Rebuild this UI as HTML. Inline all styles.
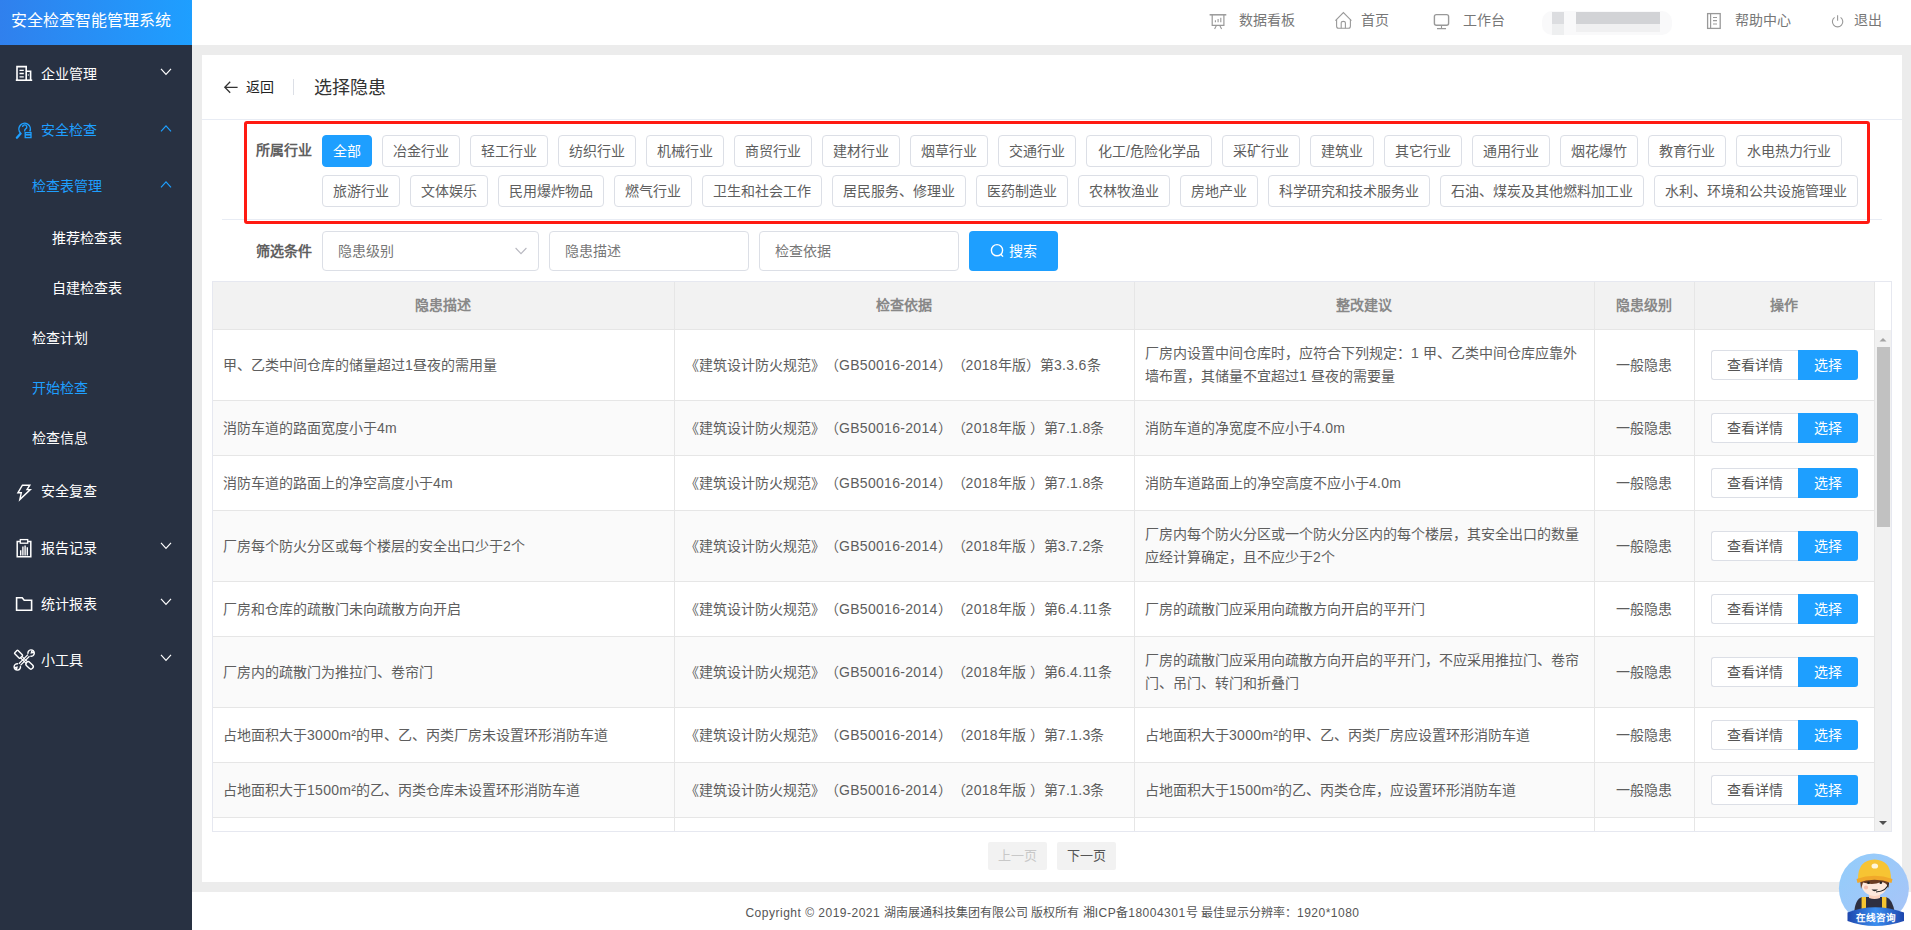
<!DOCTYPE html><html lang="zh-CN"><head><meta charset="utf-8"><style>
*{margin:0;padding:0;box-sizing:border-box}
html,body{text-spacing-trim:space-all;width:1911px;height:930px;overflow:hidden;background:#fff;font-family:"Liberation Sans",sans-serif;font-size:14px;color:#555}
.a{position:absolute;white-space:nowrap}
#side{position:absolute;left:0;top:0;width:192px;height:930px;background:#283142}
#logo{position:absolute;left:0;top:0;width:192px;height:45px;background:linear-gradient(90deg,#3080ed,#1e9fff);color:#fff;font-size:16px;line-height:42px;padding-left:11px;white-space:nowrap}
.mt{position:absolute;color:#fff;font-size:14px;line-height:20px;white-space:nowrap;font-weight:500}
.blue{color:#1e9fff}
#hdr{position:absolute;left:192px;top:0;width:1719px;height:45px;background:#fff}
#main{position:absolute;left:192px;top:45px;width:1719px;height:847px;background:#ececec}
#card{position:absolute;left:202px;top:55px;width:1700px;height:827px;background:#fff}
#foot{position:absolute;left:192px;top:892px;width:1719px;height:38px;background:#fff}
.nt{position:absolute;top:10px;line-height:20px;color:#777;font-size:14px;white-space:nowrap}
.tags{position:absolute;left:322px;top:135px;width:1545px;display:flex;flex-wrap:wrap;gap:8px 10px}
.tag{height:32px;line-height:30px;border:1px solid #dcdfe6;border-radius:4px;padding:0 10px;font-size:14px;color:#5e5e5e;background:#fff;white-space:nowrap}
.tag.on{background:#1e9fff;border-color:#1e9fff;color:#fff}
.inp{position:absolute;top:231px;height:40px;border:1px solid #dcdfe6;border-radius:4px;line-height:38px;padding-left:15px;color:#777;background:#fff;white-space:nowrap}
.cell{position:absolute;color:#5e5e5e;font-size:14px;white-space:nowrap}
.hl{position:absolute;background:#e6e6e6}
</style></head><body>
<div id="side">
<div id="logo">安全检查智能管理系统</div>
<div class="mt" style="left:41px;top:64px;color:#fff">企业管理</div>
<div class="mt" style="left:41px;top:120px;color:#1e9fff">安全检查</div>
<div class="mt" style="left:32px;top:176px;color:#1e9fff">检查表管理</div>
<div class="mt" style="left:52px;top:228px;color:#fff">推荐检查表</div>
<div class="mt" style="left:52px;top:278px;color:#fff">自建检查表</div>
<div class="mt" style="left:32px;top:328px;color:#fff">检查计划</div>
<div class="mt" style="left:32px;top:378px;color:#1e9fff">开始检查</div>
<div class="mt" style="left:32px;top:428px;color:#fff">检查信息</div>
<div class="mt" style="left:41px;top:481px;color:#fff">安全复查</div>
<div class="mt" style="left:41px;top:538px;color:#fff">报告记录</div>
<div class="mt" style="left:41px;top:594px;color:#fff">统计报表</div>
<div class="mt" style="left:41px;top:650px;color:#fff">小工具</div>
<svg class="a" style="left:0;top:0" width="192" height="930" fill="none"><path d="M161 68.8 L166 74.3 L171 68.8" stroke="#fff" stroke-width="1.2"/><path d="M161 131.3 L166 125.8 L171 131.3" stroke="#1e9fff" stroke-width="1.2"/><path d="M161 187.3 L166 181.8 L171 187.3" stroke="#1e9fff" stroke-width="1.2"/><path d="M161 542.8 L166 548.3 L171 542.8" stroke="#fff" stroke-width="1.2"/><path d="M161 598.8 L166 604.3 L171 598.8" stroke="#fff" stroke-width="1.2"/><path d="M161 654.8 L166 660.3 L171 654.8" stroke="#fff" stroke-width="1.2"/><g stroke="#fff" stroke-width="1.6"><path d="M17 80 V66.6 H26.2 V80"/><path d="M26.2 71.3 H30.6 V80"/><path d="M15.8 80.2 H32.2"/><path d="M19.5 70.3 H23.8 M19.5 73.5 H23.8 M19.5 76.8 H23.8" stroke-width="1.3"/><path d="M27.8 75 H29" stroke-width="1.2"/></g><g stroke="#1e9fff" stroke-width="1.5"><path d="M20.57 133.03 A5.7 5.7 0 1 1 29.77 131.41"/><path d="M16.9 137.7 L20.6 133.6" stroke-width="2.3" stroke-linecap="round"/><path d="M22.6 127 A2.1 2.1 0 1 1 25.6 128.9 Q24.6 129.5 24.6 131.6" stroke-width="1.4"/><rect x="25.2" y="132.6" width="5.8" height="5" fill="#283142" stroke-width="1.3"/><path d="M25.2 134.8 H31" stroke-width="1.6"/></g><path d="M22.4 485.2 L29.8 485.2 L27 489.6 L30.3 489.6 L19.8 499.6 L21.3 492.8 L17.9 492.8 Z" stroke="#fff" stroke-width="1.4" stroke-linejoin="miter"/><g stroke="#fff" stroke-width="1.5"><path d="M20 541.6 H17.2 V556.8 H30.8 V541.6 H28"/><rect x="20.3" y="539.6" width="7.4" height="3.6" stroke-width="1.3"/><path d="M20.7 555.5 V550.3 M22.9 555.5 V546.5 M25.1 555.5 V545.5 M27.3 555.5 V547.2" stroke-width="1.4"/></g><path d="M16.6 610.2 V597.8 H22.2 L24.2 600.2 H31.6 V610.2 Z" stroke="#fff" stroke-width="1.6" stroke-linejoin="miter"/><g stroke="#fff" stroke-width="1.4" transform="translate(24.2 660) rotate(45)"><rect x="-11.8" y="-2.3" width="7.6" height="4.6" rx="0.8"/><path d="M-4.2 -1 H3.4 M-4.2 1 H3.4" stroke-width="1.1"/><rect x="3.4" y="-2.3" width="8.4" height="4.6" rx="2.3"/></g><g stroke="#fff" stroke-width="1.4" transform="translate(24.2 660) rotate(-45)"><path d="M-6.4 -1.1 H6.4 M-6.4 1.1 H6.4" stroke-width="1.2"/><path d="M-7 -1.6 A3.2 3.2 0 1 0 -7 1.6 M-12.2 -1.2 L-10.2 0 L-12.2 1.2" /><path d="M7 -1.6 A3.2 3.2 0 1 1 7 1.6 M12.2 -1.2 L10.2 0 L12.2 1.2"/></g></svg>
</div>
<div id="hdr"></div>
<div id="main"></div>
<div id="foot"></div>
<div class="a" style="left:193px;top:905px;width:1719px;text-align:center;font-size:12px;line-height:16px;color:#555"><span style="letter-spacing:0.5px">Copyright © 2019-2021 </span>湖南展通科技集团有限公司 版权所有 湘<span style="letter-spacing:0.5px">ICP</span>备<span style="letter-spacing:0.5px">18004301</span>号 最佳显示分辨率：<span style="letter-spacing:0.5px">1920*1080</span></div>
<div class="nt" style="left:1239px">数据看板</div>
<div class="nt" style="left:1361px">首页</div>
<div class="nt" style="left:1463px">工作台</div>
<div class="nt" style="left:1735px">帮助中心</div>
<div class="nt" style="left:1854px">退出</div>
<svg class="a" style="left:1190px;top:0" width="700" height="45" fill="none"><g transform="translate(-1190 0)" stroke="#999"><path d="M1209.6 14.8 H1226.3" stroke-width="1.5"/><path d="M1212.2 14.8 V25.3 H1223.9 V14.8" stroke-width="1.2"/><path d="M1215.4 20.2 V22.2 M1218.1 19 V22.2 M1220.8 17.8 V22.2" stroke-width="1.1"/><path d="M1216.4 25.6 L1214.6 29 M1219.8 25.6 L1221.6 29" stroke-width="1.1"/><path d="M1335.4 20.6 L1343.4 12.6 L1351.4 20.6" stroke-width="1.1"/><path d="M1336.6 19.6 V26.3 Q1336.6 28.3 1338.6 28.3 H1348.4 Q1350.4 28.3 1350.4 26.3 V19.6" stroke-width="1.1"/><path d="M1341.2 28.2 V22.8 Q1341.2 21.4 1343.3 21.4 Q1345.4 21.4 1345.4 22.8 V28.2" stroke-width="1.1"/><rect x="1434.4" y="14.6" width="14.2" height="10.6" rx="2" stroke-width="1.4"/><path d="M1441.5 25.4 V28.6 M1437 28.6 H1446" stroke-width="1.1"/></g></svg>
<div class="a" style="left:1542px;top:11px;width:130px;height:24px;background:#f9f9fa;border-radius:10px"></div>
<div class="a" style="left:1552px;top:12px;width:12px;height:12px;background:#dcdde0"></div>
<div class="a" style="left:1552px;top:24px;width:12px;height:11px;background:#eeeff0"></div>
<div class="a" style="left:1576px;top:12px;width:84px;height:12px;background:#d2d3d6"></div>
<div class="a" style="left:1576px;top:24px;width:84px;height:8px;background:#f0f0f1"></div>
<svg class="a" style="left:1690px;top:0" width="200" height="45" fill="none"><g transform="translate(-1690 0)" stroke="#999"><rect x="1707.6" y="13.6" width="12.6" height="14.8" stroke-width="1.3"/><path d="M1710.6 13.6 V28.4" stroke-width="1.2"/><path d="M1713 17.5 H1717 M1713 20.6 H1717 M1713 24 H1717" stroke-width="1.2"/><path d="M1834.6 17.4 A5.2 5.2 0 1 0 1840.6 17.4" stroke-width="1.1"/><path d="M1837.6 15.2 V20.8" stroke-width="1.1"/></g></svg>
<div id="card"></div>
<svg class="a" style="left:220px;top:78px" width="20" height="20" fill="none"><path d="M4.8 9.3 H17.6 M10.2 3.8 L4.8 9.3 L10.2 14.8" stroke="#333" stroke-width="1.3"/></svg>
<div class="a" style="left:246px;top:77px;line-height:20px;color:#222">返回</div>
<div class="a" style="left:293px;top:79px;width:1px;height:16px;background:#dcdfe6"></div>
<div class="a" style="left:314px;top:77px;line-height:22px;font-size:18px;color:#333">选择隐患</div>
<div class="a" style="left:202px;top:119px;width:1700px;height:1px;background:#e8ecf4"></div>
<div class="a" style="left:222px;top:219px;width:1660px;height:1px;background:#e8ecf4"></div>
<div class="a" style="left:256px;top:140px;line-height:20px;font-weight:bold;color:#606060">所属行业</div>
<div class="tags">
<div class="tag on" style="width:50px;text-align:center;padding:0">全部</div>
<div class="tag" style="width:78px;text-align:center;padding:0">冶金行业</div>
<div class="tag" style="width:78px;text-align:center;padding:0">轻工行业</div>
<div class="tag" style="width:78px;text-align:center;padding:0">纺织行业</div>
<div class="tag" style="width:78px;text-align:center;padding:0">机械行业</div>
<div class="tag" style="width:78px;text-align:center;padding:0">商贸行业</div>
<div class="tag" style="width:78px;text-align:center;padding:0">建材行业</div>
<div class="tag" style="width:78px;text-align:center;padding:0">烟草行业</div>
<div class="tag" style="width:78px;text-align:center;padding:0">交通行业</div>
<div class="tag" style="width:126px;text-align:center;padding:0">化工/危险化学品</div>
<div class="tag" style="width:78px;text-align:center;padding:0">采矿行业</div>
<div class="tag" style="width:64px;text-align:center;padding:0">建筑业</div>
<div class="tag" style="width:78px;text-align:center;padding:0">其它行业</div>
<div class="tag" style="width:78px;text-align:center;padding:0">通用行业</div>
<div class="tag" style="width:78px;text-align:center;padding:0">烟花爆竹</div>
<div class="tag" style="width:78px;text-align:center;padding:0">教育行业</div>
<div class="tag" style="width:106px;text-align:center;padding:0">水电热力行业</div>
</div><div class="tags" style="top:175px">
<div class="tag" style="width:78px;text-align:center;padding:0">旅游行业</div>
<div class="tag" style="width:78px;text-align:center;padding:0">文体娱乐</div>
<div class="tag" style="width:106px;text-align:center;padding:0">民用爆炸物品</div>
<div class="tag" style="width:78px;text-align:center;padding:0">燃气行业</div>
<div class="tag" style="width:120px;text-align:center;padding:0">卫生和社会工作</div>
<div class="tag" style="width:134px;text-align:center;padding:0">居民服务、修理业</div>
<div class="tag" style="width:92px;text-align:center;padding:0">医药制造业</div>
<div class="tag" style="width:92px;text-align:center;padding:0">农林牧渔业</div>
<div class="tag" style="width:78px;text-align:center;padding:0">房地产业</div>
<div class="tag" style="width:162px;text-align:center;padding:0">科学研究和技术服务业</div>
<div class="tag" style="width:204px;text-align:center;padding:0">石油、煤炭及其他燃料加工业</div>
<div class="tag" style="width:204px;text-align:center;padding:0">水利、环境和公共设施管理业</div>
</div>
<div class="a" style="left:244px;top:121px;width:1626px;height:103px;border:3px solid #ff1a12;border-radius:3px"></div>
<div class="a" style="left:256px;top:241px;line-height:20px;font-weight:bold;color:#606060">筛选条件</div>
<div class="inp" style="left:322px;width:217px">隐患级别</div>
<svg class="a" style="left:510px;top:242px" width="20" height="20" fill="none"><path d="M5.6 6 L11 11.6 L16.4 6" stroke="#b8b8c0" stroke-width="1.1"/></svg>
<div class="inp" style="left:549px;width:200px">隐患描述</div>
<div class="inp" style="left:759px;width:200px">检查依据</div>
<div class="a" style="left:969px;top:231px;width:89px;height:40px;background:#1e9fff;border-radius:4px"></div>
<svg class="a" style="left:985px;top:240px" width="24" height="24" fill="none"><circle cx="12" cy="10.2" r="5.6" stroke="#fff" stroke-width="1.4"/><path d="M15.8 14.2 L18 16.6" stroke="#fff" stroke-width="1.4"/></svg>
<div class="a" style="left:1009px;top:241px;line-height:20px;color:#fff">搜索</div>
<div class="a" style="left:212px;top:281px;width:1680px;height:551px;border:1px solid #e6e8f0;background:#fff;overflow:hidden">
<div class="a" style="left:0px;top:0px;width:1661px;height:47px;background:#f2f2f2"></div>
<div class="a" style="left:0px;top:119px;width:1661px;height:54px;background:#fafafa"></div>
<div class="a" style="left:0px;top:229px;width:1661px;height:70px;background:#fafafa"></div>
<div class="a" style="left:0px;top:355px;width:1661px;height:70px;background:#fafafa"></div>
<div class="a" style="left:0px;top:481px;width:1661px;height:54px;background:#fafafa"></div>
<div class="a" style="left:0px;top:118px;width:1661px;height:1px;background:#e6e6e6"></div>
<div class="a" style="left:0px;top:173px;width:1661px;height:1px;background:#e6e6e6"></div>
<div class="a" style="left:0px;top:228px;width:1661px;height:1px;background:#e6e6e6"></div>
<div class="a" style="left:0px;top:299px;width:1661px;height:1px;background:#e6e6e6"></div>
<div class="a" style="left:0px;top:354px;width:1661px;height:1px;background:#e6e6e6"></div>
<div class="a" style="left:0px;top:425px;width:1661px;height:1px;background:#e6e6e6"></div>
<div class="a" style="left:0px;top:480px;width:1661px;height:1px;background:#e6e6e6"></div>
<div class="a" style="left:0px;top:535px;width:1661px;height:1px;background:#e6e6e6"></div>
<div class="a" style="left:0px;top:590px;width:1661px;height:1px;background:#e6e6e6"></div>
<div class="a" style="left:0px;top:47px;width:1661px;height:1px;background:#e6e6e6"></div>
<div class="a" style="left:461px;top:0px;width:1px;height:560px;background:#e6e6e6"></div>
<div class="a" style="left:921px;top:0px;width:1px;height:560px;background:#e6e6e6"></div>
<div class="a" style="left:1381px;top:0px;width:1px;height:560px;background:#e6e6e6"></div>
<div class="a" style="left:1481px;top:0px;width:1px;height:560px;background:#e6e6e6"></div>
<div class="a" style="left:1661px;top:0px;width:1px;height:560px;background:#e6e6e6"></div>
<div class="cell" style="left:-1px;top:13px;width:462px;text-align:center;line-height:20px;font-weight:bold;color:#888">隐患描述</div>
<div class="cell" style="left:461px;top:13px;width:460px;text-align:center;line-height:20px;font-weight:bold;color:#888">检查依据</div>
<div class="cell" style="left:921px;top:13px;width:460px;text-align:center;line-height:20px;font-weight:bold;color:#888">整改建议</div>
<div class="cell" style="left:1381px;top:13px;width:100px;text-align:center;line-height:20px;font-weight:bold;color:#888">隐患级别</div>
<div class="cell" style="left:1481px;top:13px;width:180px;text-align:center;line-height:20px;font-weight:bold;color:#888">操作</div>
<div class="cell" style="left:10px;top:73.0px;line-height:20px">甲、乙类中间仓库的储量超过<span style="letter-spacing:0.3px">1</span>昼夜的需用量</div>
<div class="cell" style="left:472px;top:73.0px;line-height:20px">《建筑设计防火规范》（<span style="letter-spacing:0.3px">GB50016-2014</span>）（<span style="letter-spacing:0.3px">2018</span>年版）第<span style="letter-spacing:0.3px">3.3.6</span>条</div>
<div class="cell" style="left:932px;top:60.0px;line-height:23px">厂房内设置中间仓库时，应符合下列规定：<span style="letter-spacing:0.3px">1 </span>甲、乙类中间仓库应靠外</div>
<div class="cell" style="left:932px;top:83.0px;line-height:23px">墙布置，其储量不宜超过<span style="letter-spacing:0.3px">1 </span>昼夜的需要量</div>
<div class="cell" style="left:1381px;top:73.0px;width:100px;text-align:center;line-height:20px">一般隐患</div>
<div class="a" style="left:1498px;top:68.0px;width:87px;height:30px;border:1px solid #dcdfe6;border-right:0;border-radius:3px 0 0 3px;background:#fff;color:#555;text-align:center;line-height:28px;padding-left:0px">查看详情</div>
<div class="a" style="left:1585px;top:68.0px;width:60px;height:30px;border-radius:0 3px 3px 0;background:#1e9fff;color:#fff;text-align:center;line-height:30px">选择</div>
<div class="cell" style="left:10px;top:136.0px;line-height:20px">消防车道的路面宽度小于<span style="letter-spacing:0.3px">4m</span></div>
<div class="cell" style="left:472px;top:136.0px;line-height:20px">《建筑设计防火规范》（<span style="letter-spacing:0.3px">GB50016-2014</span>）（<span style="letter-spacing:0.3px">2018</span>年版 ）第<span style="letter-spacing:0.3px">7.1.8</span>条</div>
<div class="cell" style="left:932px;top:134.5px;line-height:23px">消防车道的净宽度不应小于<span style="letter-spacing:0.3px">4.0m</span></div>
<div class="cell" style="left:1381px;top:136.0px;width:100px;text-align:center;line-height:20px">一般隐患</div>
<div class="a" style="left:1498px;top:131.0px;width:87px;height:30px;border:1px solid #dcdfe6;border-right:0;border-radius:3px 0 0 3px;background:#fff;color:#555;text-align:center;line-height:28px;padding-left:0px">查看详情</div>
<div class="a" style="left:1585px;top:131.0px;width:60px;height:30px;border-radius:0 3px 3px 0;background:#1e9fff;color:#fff;text-align:center;line-height:30px">选择</div>
<div class="cell" style="left:10px;top:191.0px;line-height:20px">消防车道的路面上的净空高度小于<span style="letter-spacing:0.3px">4m</span></div>
<div class="cell" style="left:472px;top:191.0px;line-height:20px">《建筑设计防火规范》（<span style="letter-spacing:0.3px">GB50016-2014</span>）（<span style="letter-spacing:0.3px">2018</span>年版 ）第<span style="letter-spacing:0.3px">7.1.8</span>条</div>
<div class="cell" style="left:932px;top:189.5px;line-height:23px">消防车道路面上的净空高度不应小于<span style="letter-spacing:0.3px">4.0m</span></div>
<div class="cell" style="left:1381px;top:191.0px;width:100px;text-align:center;line-height:20px">一般隐患</div>
<div class="a" style="left:1498px;top:186.0px;width:87px;height:30px;border:1px solid #dcdfe6;border-right:0;border-radius:3px 0 0 3px;background:#fff;color:#555;text-align:center;line-height:28px;padding-left:0px">查看详情</div>
<div class="a" style="left:1585px;top:186.0px;width:60px;height:30px;border-radius:0 3px 3px 0;background:#1e9fff;color:#fff;text-align:center;line-height:30px">选择</div>
<div class="cell" style="left:10px;top:254.0px;line-height:20px">厂房每个防火分区或每个楼层的安全出口少于<span style="letter-spacing:0.3px">2</span>个</div>
<div class="cell" style="left:472px;top:254.0px;line-height:20px">《建筑设计防火规范》（<span style="letter-spacing:0.3px">GB50016-2014</span>）（<span style="letter-spacing:0.3px">2018</span>年版 ）第<span style="letter-spacing:0.3px">3.7.2</span>条</div>
<div class="cell" style="left:932px;top:241.0px;line-height:23px">厂房内每个防火分区或一个防火分区内的每个楼层，其安全出口的数量</div>
<div class="cell" style="left:932px;top:264.0px;line-height:23px">应经计算确定，且不应少于<span style="letter-spacing:0.3px">2</span>个</div>
<div class="cell" style="left:1381px;top:254.0px;width:100px;text-align:center;line-height:20px">一般隐患</div>
<div class="a" style="left:1498px;top:249.0px;width:87px;height:30px;border:1px solid #dcdfe6;border-right:0;border-radius:3px 0 0 3px;background:#fff;color:#555;text-align:center;line-height:28px;padding-left:0px">查看详情</div>
<div class="a" style="left:1585px;top:249.0px;width:60px;height:30px;border-radius:0 3px 3px 0;background:#1e9fff;color:#fff;text-align:center;line-height:30px">选择</div>
<div class="cell" style="left:10px;top:317.0px;line-height:20px">厂房和仓库的疏散门未向疏散方向开启</div>
<div class="cell" style="left:472px;top:317.0px;line-height:20px">《建筑设计防火规范》（<span style="letter-spacing:0.3px">GB50016-2014</span>）（<span style="letter-spacing:0.3px">2018</span>年版 ）第<span style="letter-spacing:0.3px">6.4.11</span>条</div>
<div class="cell" style="left:932px;top:315.5px;line-height:23px">厂房的疏散门应采用向疏散方向开启的平开门</div>
<div class="cell" style="left:1381px;top:317.0px;width:100px;text-align:center;line-height:20px">一般隐患</div>
<div class="a" style="left:1498px;top:312.0px;width:87px;height:30px;border:1px solid #dcdfe6;border-right:0;border-radius:3px 0 0 3px;background:#fff;color:#555;text-align:center;line-height:28px;padding-left:0px">查看详情</div>
<div class="a" style="left:1585px;top:312.0px;width:60px;height:30px;border-radius:0 3px 3px 0;background:#1e9fff;color:#fff;text-align:center;line-height:30px">选择</div>
<div class="cell" style="left:10px;top:380.0px;line-height:20px">厂房内的疏散门为推拉门、卷帘门</div>
<div class="cell" style="left:472px;top:380.0px;line-height:20px">《建筑设计防火规范》（<span style="letter-spacing:0.3px">GB50016-2014</span>）（<span style="letter-spacing:0.3px">2018</span>年版 ）第<span style="letter-spacing:0.3px">6.4.11</span>条</div>
<div class="cell" style="left:932px;top:367.0px;line-height:23px">厂房的疏散门应采用向疏散方向开启的平开门，不应采用推拉门、卷帘</div>
<div class="cell" style="left:932px;top:390.0px;line-height:23px">门、吊门、转门和折叠门</div>
<div class="cell" style="left:1381px;top:380.0px;width:100px;text-align:center;line-height:20px">一般隐患</div>
<div class="a" style="left:1498px;top:375.0px;width:87px;height:30px;border:1px solid #dcdfe6;border-right:0;border-radius:3px 0 0 3px;background:#fff;color:#555;text-align:center;line-height:28px;padding-left:0px">查看详情</div>
<div class="a" style="left:1585px;top:375.0px;width:60px;height:30px;border-radius:0 3px 3px 0;background:#1e9fff;color:#fff;text-align:center;line-height:30px">选择</div>
<div class="cell" style="left:10px;top:443.0px;line-height:20px">占地面积大于<span style="letter-spacing:0.3px">3000m²</span>的甲、乙、丙类厂房未设置环形消防车道</div>
<div class="cell" style="left:472px;top:443.0px;line-height:20px">《建筑设计防火规范》（<span style="letter-spacing:0.3px">GB50016-2014</span>）（<span style="letter-spacing:0.3px">2018</span>年版 ）第<span style="letter-spacing:0.3px">7.1.3</span>条</div>
<div class="cell" style="left:932px;top:441.5px;line-height:23px">占地面积大于<span style="letter-spacing:0.3px">3000m²</span>的甲、乙、丙类厂房应设置环形消防车道</div>
<div class="cell" style="left:1381px;top:443.0px;width:100px;text-align:center;line-height:20px">一般隐患</div>
<div class="a" style="left:1498px;top:438.0px;width:87px;height:30px;border:1px solid #dcdfe6;border-right:0;border-radius:3px 0 0 3px;background:#fff;color:#555;text-align:center;line-height:28px;padding-left:0px">查看详情</div>
<div class="a" style="left:1585px;top:438.0px;width:60px;height:30px;border-radius:0 3px 3px 0;background:#1e9fff;color:#fff;text-align:center;line-height:30px">选择</div>
<div class="cell" style="left:10px;top:498.0px;line-height:20px">占地面积大于<span style="letter-spacing:0.3px">1500m²</span>的乙、丙类仓库未设置环形消防车道</div>
<div class="cell" style="left:472px;top:498.0px;line-height:20px">《建筑设计防火规范》（<span style="letter-spacing:0.3px">GB50016-2014</span>）（<span style="letter-spacing:0.3px">2018</span>年版 ）第<span style="letter-spacing:0.3px">7.1.3</span>条</div>
<div class="cell" style="left:932px;top:496.5px;line-height:23px">占地面积大于<span style="letter-spacing:0.3px">1500m²</span>的乙、丙类仓库，应设置环形消防车道</div>
<div class="cell" style="left:1381px;top:498.0px;width:100px;text-align:center;line-height:20px">一般隐患</div>
<div class="a" style="left:1498px;top:493.0px;width:87px;height:30px;border:1px solid #dcdfe6;border-right:0;border-radius:3px 0 0 3px;background:#fff;color:#555;text-align:center;line-height:28px;padding-left:0px">查看详情</div>
<div class="a" style="left:1585px;top:493.0px;width:60px;height:30px;border-radius:0 3px 3px 0;background:#1e9fff;color:#fff;text-align:center;line-height:30px">选择</div>
<div class="a" style="left:1662px;top:0px;width:16px;height:48px;background:#fff"></div>
<div class="a" style="left:1662px;top:48px;width:16px;height:501px;background:#f1f1f1"></div>
<div class="a" style="left:1664px;top:65px;width:13px;height:180px;background:#c1c1c1"></div>
<svg class="a" style="left:1662px;top:48px" width="16" height="501"><path d="M4.5 11.5 L8 8 L11.5 11.5 Z" fill="#a3a3a3"/><path d="M4 491 L8 495 L12 491 Z" fill="#505050"/></svg>
</div>
<div class="a" style="left:988px;top:842px;width:59px;height:28px;background:#f2f2f2;border-radius:2px;color:#c8c8c8;font-size:13px;line-height:28px;text-align:center">上一页</div>
<div class="a" style="left:1057px;top:842px;width:59px;height:28px;background:#f2f2f2;border-radius:2px;color:#555;font-size:13px;line-height:28px;text-align:center">下一页</div>
<svg class="a" style="left:1834px;top:850px" width="77" height="80" viewBox="1834 850 77 80">
<defs><linearGradient id="cg" x1="0" y1="0" x2="1" y2="1"><stop offset="0" stop-color="#92cdfb"/><stop offset="1" stop-color="#a9c4f7"/></linearGradient>
<linearGradient id="bg2" x1="0" y1="0" x2="1" y2="0"><stop offset="0" stop-color="#1d46ad"/><stop offset=".5" stop-color="#3c8ff0"/><stop offset="1" stop-color="#1d46ad"/></linearGradient></defs>
<circle cx="1873.9" cy="888.6" r="35" fill="url(#cg)"/>
<path d="M1854 914 Q1855 899 1862 897 L1886 897 Q1893 899 1895 914 Z" fill="#2e2f40"/>
<path d="M1861.6 912 V897 H1866 V912 Z M1882 912 V897 H1886.4 V912 Z" fill="#f6c530"/>
<path d="M1869 890 H1880 V898 Q1874.5 900 1869 898 Z" fill="#fbd3bf"/>
<path d="M1861 878 Q1860 895 1874.5 896 Q1889 895 1888 878 Z" fill="#fde8dc"/>
<path d="M1860 879 L1889 879 L1888.6 888 Q1887 882.5 1881 882 Q1873 885.5 1863 882.5 L1861 889 Z" fill="#6b3c22"/>
<path d="M1858 879 Q1858 860 1874.5 859.5 Q1891 860 1891 879 Z" fill="#f7c433"/>
<path d="M1856.5 879 Q1874.5 872.5 1892.5 879 L1891.5 883 Q1874.5 876.5 1857.5 883 Z" fill="#f1a82a"/>
<ellipse cx="1874.8" cy="866" rx="3.3" ry="2.6" fill="#fff6d8"/>
<circle cx="1868.5" cy="882.8" r="1.3" fill="#222"/><circle cx="1880.8" cy="882.8" r="1.3" fill="#222"/>
<circle cx="1866" cy="887.5" r="2.1" fill="#f7bfae"/>
<path d="M1871.5 889.5 Q1874.5 893 1878 889.5 Z" fill="#2a2a2a"/>
<path d="M1888.5 883 Q1887.5 891 1876 892" stroke="#222" stroke-width="1.1" fill="none"/>
<path d="M1847.5 912.5 Q1874.5 902 1904 912.5 L1904 921 Q1874.5 931 1847.5 921 Z" fill="url(#bg2)"/>
<text x="1875.5" y="920.6" font-size="9.6" font-weight="bold" fill="#fff" text-anchor="middle" font-family="Liberation Sans, sans-serif">在线咨询</text>
</svg>
</body></html>
